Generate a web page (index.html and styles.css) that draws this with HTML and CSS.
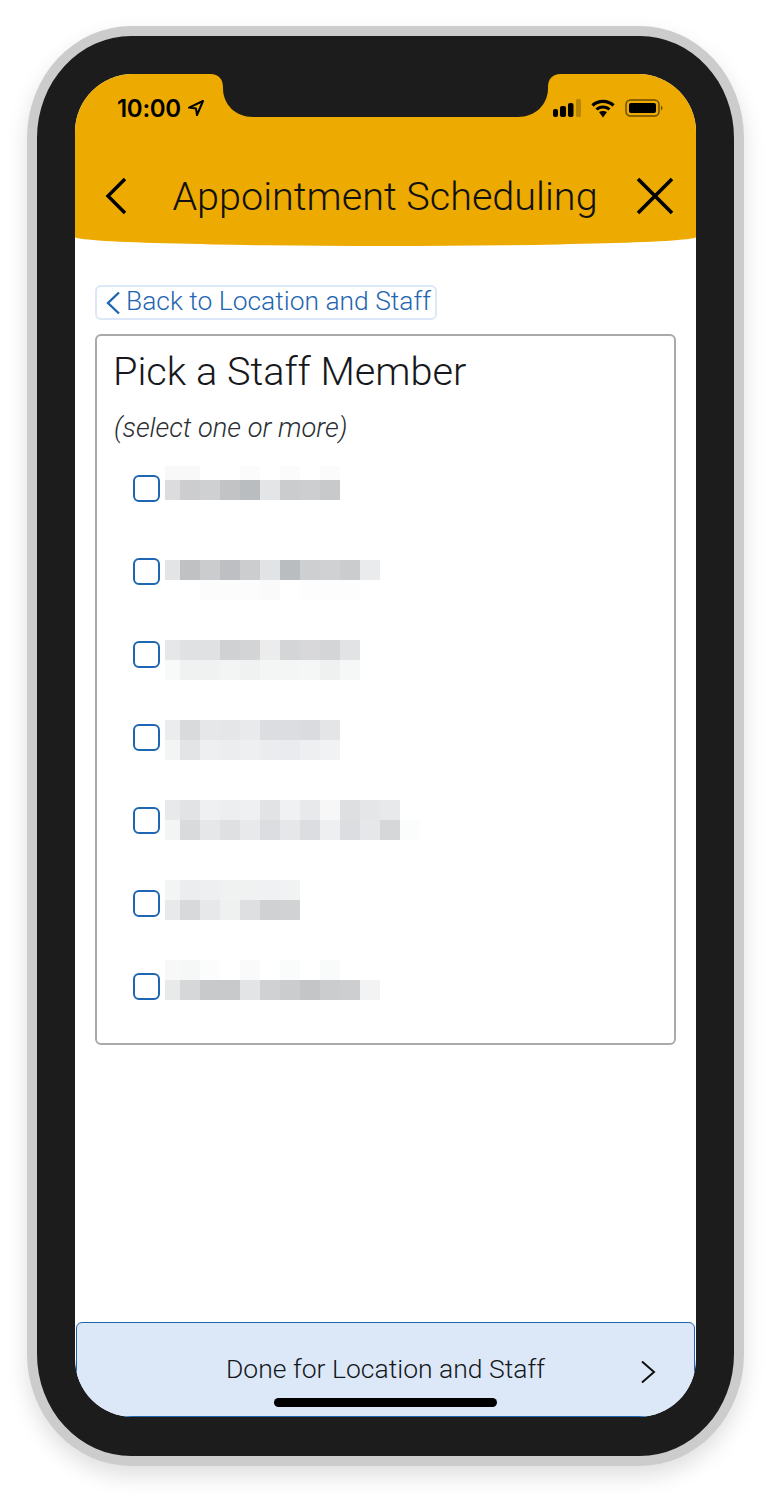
FILE: index.html
```html
<!DOCTYPE html>
<html lang="en">
<head>
<meta charset="utf-8">
<title>Appointment Scheduling</title>
<link rel="stylesheet" href="styles.css">
</head>
<body>
<div class="phone">
  <div class="screen">
    <svg class="notch" viewBox="0 0 349 43" width="349" height="43" aria-hidden="true">
      <path d="M0 0 H349 C342 0 337 5 337 13 V14 C337 31 324 43 307 43 H42 C25 43 12 31 12 14 V13 C12 5 7 0 0 0 Z" fill="#1c1c1c"/>
    </svg>
    <header class="header">
      <div class="status">
        <div class="status-left">
          <span class="time">10:00</span>
          <svg class="arrow" viewBox="0 0 18 18" width="18" height="18" aria-hidden="true">
            <path d="M16 2 L2 8.6 L9 9.6 L10 16 Z" fill="none" stroke="#000" stroke-width="2" stroke-linejoin="round"/>
          </svg>
        </div>
        <div class="status-right">
          <svg viewBox="-1 0 29 18" width="29" height="18" aria-hidden="true">
            <rect x="0" y="10" width="5" height="8" rx="2" fill="#000"/>
            <rect x="7" y="7" width="6" height="11" rx="2" fill="#000"/>
            <rect x="15" y="4" width="5.500" height="14" rx="2" fill="#000"/>
            <rect x="23" y="0" width="5" height="18" rx="1.500" fill="#b98500"/>
          </svg>
          <svg viewBox="0 0 24 19" width="24" height="19" aria-hidden="true">
            <path d="M1.500 6.500 C7 1 17 1 22.500 6.500" fill="none" stroke="#000" stroke-width="3.200"/>
            <path d="M5.500 10.500 C9 7 15 7 18.500 10.500" fill="none" stroke="#000" stroke-width="3"/>
            <path d="M8 13 C10.500 11.500 13.500 11.500 16 13 L12 18.500 Z" fill="#000"/>
          </svg>
          <svg viewBox="0 0 38 18" width="38" height="18" aria-hidden="true">
            <rect x="1" y="1" width="33" height="16" rx="4.500" fill="none" stroke="#6b4e00" stroke-width="1.500"/>
            <rect x="4" y="4" width="27" height="10" rx="2" fill="#000"/>
            <path d="M36 6.500 C38 7.500 38 10.500 36 11.500 Z" fill="#6b4e00"/>
          </svg>
        </div>
      </div>
      <nav class="nav">
        <svg class="nav-back" viewBox="0 0 24 38" width="24" height="38" aria-hidden="true">
          <path d="M21 2 L4 19 L21 36" fill="none" stroke="#000" stroke-width="3.400"/>
        </svg>
        <h1 class="title">Appointment Scheduling</h1>
        <svg viewBox="0 0 38 38" width="38" height="38" aria-hidden="true">
          <path d="M2 2 L36 36 M36 2 L2 36" fill="none" stroke="#000" stroke-width="3.600"/>
        </svg>
      </nav>
    </header>
    <main class="main">
      <a class="back">
        <svg viewBox="0 0 16 24" width="16" height="24" aria-hidden="true">
          <path d="M14 1.500 L3 12 L14 22.500" fill="none" stroke="#1f66b2" stroke-width="2.400"/>
        </svg>
        <span class="back-label">Back to Location and Staff</span>
      </a>
      <section class="card">
        <h2 class="card-title">Pick a Staff Member</h2>
        <p class="hint">(select one or more)</p>
        <div class="list">
          <div class="checks">
            <span class="check"></span>
            <span class="check"></span>
            <span class="check"></span>
            <span class="check"></span>
            <span class="check"></span>
            <span class="check"></span>
            <span class="check"></span>
          </div>
          <svg class="names" viewBox="165 460 255 540" width="255" height="540" shape-rendering="crispEdges" aria-hidden="true">
            <g>
              <rect x="165" y="466" width="35" height="14" fill="#f8f8f8"/><rect x="240" y="466" width="20" height="14" fill="#fbfbfb"/><rect x="280" y="466" width="20" height="14" fill="#fbfbfb"/><rect x="320" y="466" width="20" height="14" fill="#fbfbfb"/>
              <rect x="165" y="480" width="15" height="20" fill="#dcdcde"/><rect x="180" y="480" width="20" height="20" fill="#cdcdcf"/><rect x="200" y="480" width="20" height="20" fill="#cfd0d1"/><rect x="220" y="480" width="20" height="20" fill="#c2c3c5"/><rect x="240" y="480" width="20" height="20" fill="#babdc0"/><rect x="260" y="480" width="20" height="20" fill="#e4e5e7"/><rect x="280" y="480" width="20" height="20" fill="#cbcccd"/><rect x="300" y="480" width="20" height="20" fill="#cdced0"/><rect x="320" y="480" width="20" height="20" fill="#c8c9cb"/>
            </g>
            <g>
              <rect x="165" y="560" width="15" height="20" fill="#e3e4e6"/><rect x="180" y="560" width="20" height="20" fill="#c0c1c3"/><rect x="200" y="560" width="20" height="20" fill="#cbcccd"/><rect x="220" y="560" width="20" height="20" fill="#bebfc2"/><rect x="240" y="560" width="20" height="20" fill="#cbcdce"/><rect x="260" y="560" width="20" height="20" fill="#e2e3e5"/><rect x="280" y="560" width="20" height="20" fill="#babdc0"/><rect x="300" y="560" width="20" height="20" fill="#cdcfd0"/><rect x="320" y="560" width="20" height="20" fill="#d0d1d3"/><rect x="340" y="560" width="20" height="20" fill="#cbccce"/><rect x="360" y="560" width="20" height="20" fill="#eaebec"/>
              <rect x="200" y="580" width="60" height="20" fill="#fcfcfc"/><rect x="260" y="580" width="20" height="20" fill="#fafafa"/><rect x="300" y="580" width="60" height="20" fill="#fdfdfd"/>
            </g>
            <g>
              <rect x="165" y="640" width="15" height="20" fill="#e6e7e8"/><rect x="180" y="640" width="20" height="20" fill="#e0e1e3"/><rect x="200" y="640" width="20" height="20" fill="#e0e1e2"/><rect x="220" y="640" width="20" height="20" fill="#d0d1d3"/><rect x="240" y="640" width="20" height="20" fill="#d3d4d6"/><rect x="260" y="640" width="20" height="20" fill="#ebeceb"/><rect x="280" y="640" width="20" height="20" fill="#d4d5d7"/><rect x="300" y="640" width="20" height="20" fill="#d8d8db"/><rect x="320" y="640" width="20" height="20" fill="#d4d5d7"/><rect x="340" y="640" width="20" height="20" fill="#e2e3e5"/>
              <rect x="165" y="660" width="15" height="20" fill="#f8f9f9"/><rect x="180" y="660" width="20" height="20" fill="#f0f1f1"/><rect x="200" y="660" width="20" height="20" fill="#f0f1f1"/><rect x="220" y="660" width="20" height="20" fill="#f3f4f4"/><rect x="240" y="660" width="20" height="20" fill="#f0f1f1"/><rect x="260" y="660" width="20" height="20" fill="#f4f5f5"/><rect x="280" y="660" width="20" height="20" fill="#f4f5f5"/><rect x="300" y="660" width="20" height="20" fill="#f5f6f6"/><rect x="320" y="660" width="20" height="20" fill="#eff0f0"/><rect x="340" y="660" width="20" height="20" fill="#f6f7f7"/>
            </g>
            <g>
              <rect x="165" y="720" width="15" height="20" fill="#ebecee"/><rect x="180" y="720" width="20" height="20" fill="#d9dadc"/><rect x="200" y="720" width="20" height="20" fill="#e6e7e9"/><rect x="220" y="720" width="20" height="20" fill="#e5e6e8"/><rect x="240" y="720" width="20" height="20" fill="#e9eaec"/><rect x="260" y="720" width="20" height="20" fill="#dcdde0"/><rect x="280" y="720" width="20" height="20" fill="#dcdde0"/><rect x="300" y="720" width="20" height="20" fill="#dadbde"/><rect x="320" y="720" width="20" height="20" fill="#e4e5e7"/>
              <rect x="165" y="740" width="15" height="20" fill="#f3f4f4"/><rect x="180" y="740" width="20" height="20" fill="#e3e4e6"/><rect x="200" y="740" width="20" height="20" fill="#eeeff0"/><rect x="220" y="740" width="20" height="20" fill="#ecedee"/><rect x="240" y="740" width="20" height="20" fill="#eeeff1"/><rect x="260" y="740" width="20" height="20" fill="#ebecee"/><rect x="280" y="740" width="20" height="20" fill="#eaebee"/><rect x="300" y="740" width="20" height="20" fill="#eeeff1"/><rect x="320" y="740" width="20" height="20" fill="#f1f2f3"/>
            </g>
            <g>
              <rect x="165" y="800" width="15" height="20" fill="#e8e9ea"/><rect x="180" y="800" width="20" height="20" fill="#e2e3e5"/><rect x="200" y="800" width="20" height="20" fill="#eff0f1"/><rect x="220" y="800" width="20" height="20" fill="#edeef0"/><rect x="240" y="800" width="20" height="20" fill="#eff0f2"/><rect x="260" y="800" width="20" height="20" fill="#e2e3e5"/><rect x="280" y="800" width="20" height="20" fill="#f0f1f2"/><rect x="300" y="800" width="20" height="20" fill="#e8e9eb"/><rect x="320" y="800" width="20" height="20" fill="#f7f7f8"/><rect x="340" y="800" width="20" height="20" fill="#dedfe1"/><rect x="360" y="800" width="20" height="20" fill="#e5e6e8"/><rect x="380" y="800" width="20" height="20" fill="#e8e9ea"/>
              <rect x="165" y="820" width="15" height="20" fill="#f3f4f4"/><rect x="180" y="820" width="20" height="20" fill="#d9dadc"/><rect x="200" y="820" width="20" height="20" fill="#e6e7e9"/><rect x="220" y="820" width="20" height="20" fill="#dfe0e2"/><rect x="240" y="820" width="20" height="20" fill="#e8e9eb"/><rect x="260" y="820" width="20" height="20" fill="#dcdde0"/><rect x="280" y="820" width="20" height="20" fill="#e6e7e9"/><rect x="300" y="820" width="20" height="20" fill="#dcdde0"/><rect x="320" y="820" width="20" height="20" fill="#eeeff1"/><rect x="340" y="820" width="20" height="20" fill="#dcdde0"/><rect x="360" y="820" width="20" height="20" fill="#e6e7e9"/><rect x="380" y="820" width="20" height="20" fill="#d6d7d9"/><rect x="400" y="820" width="20" height="20" fill="#fbfcfc"/>
            </g>
            <g>
              <rect x="165" y="880" width="15" height="20" fill="#f3f4f4"/><rect x="180" y="880" width="20" height="20" fill="#ecedee"/><rect x="200" y="880" width="20" height="20" fill="#eeeff0"/><rect x="220" y="880" width="20" height="20" fill="#f0f1f1"/><rect x="240" y="880" width="20" height="20" fill="#f0f1f1"/><rect x="260" y="880" width="20" height="20" fill="#f0f1f2"/><rect x="280" y="880" width="20" height="20" fill="#f1f2f2"/>
              <rect x="165" y="900" width="15" height="20" fill="#e8e9eb"/><rect x="180" y="900" width="20" height="20" fill="#d8d9db"/><rect x="200" y="900" width="20" height="20" fill="#e7e8ea"/><rect x="220" y="900" width="20" height="20" fill="#eff0f0"/><rect x="240" y="900" width="20" height="20" fill="#dedfe1"/><rect x="260" y="900" width="20" height="20" fill="#d0d1d3"/><rect x="280" y="900" width="20" height="20" fill="#d1d2d4"/>
            </g>
            <g>
              <rect x="165" y="960" width="15" height="20" fill="#f8f8f8"/><rect x="180" y="960" width="20" height="20" fill="#f6f7f7"/><rect x="200" y="960" width="20" height="20" fill="#fcfcfc"/><rect x="240" y="960" width="20" height="20" fill="#fafafa"/><rect x="280" y="960" width="20" height="20" fill="#fafbfb"/><rect x="320" y="960" width="20" height="20" fill="#f9fafa"/>
              <rect x="165" y="980" width="15" height="20" fill="#e8e9e9"/><rect x="180" y="980" width="20" height="20" fill="#d6d7d9"/><rect x="200" y="980" width="20" height="20" fill="#c8c9cb"/><rect x="220" y="980" width="20" height="20" fill="#c8c9cb"/><rect x="240" y="980" width="20" height="20" fill="#e3e4e6"/><rect x="260" y="980" width="20" height="20" fill="#d0d1d3"/><rect x="280" y="980" width="20" height="20" fill="#cbccce"/><rect x="300" y="980" width="20" height="20" fill="#c4c5c7"/><rect x="320" y="980" width="20" height="20" fill="#cbccce"/><rect x="340" y="980" width="20" height="20" fill="#cdced0"/><rect x="360" y="980" width="20" height="20" fill="#f3f3f4"/>
            </g>
          </svg>
        </div>
      </section>
    </main>
    <footer class="footer">
      <span></span>
      <span class="done">Done for Location and Staff</span>
      <svg class="done-arrow" viewBox="0 0 16 24" width="16" height="24" aria-hidden="true">
        <path d="M2 1.500 L14 12 L2 22.500" fill="none" stroke="#111" stroke-width="2"/>
      </svg>
      <span class="home-bar"></span>
    </footer>
  </div>
</div>
</body>
</html>
```
FILE: styles.css
```css
* { box-sizing: border-box; }
html, body { margin: 0; padding: 0; background: #fff; }
body { height: 1494px; overflow: hidden; font-family: Roboto, "Liberation Sans", sans-serif; }
.phone {
  width: 717px;
  height: 1440px;
  margin: 26px 0 0 27px;
  padding: 38px;
  background: #1c1c1c;
  border: 10px solid #ccc;
  border-radius: 104px / 112px;
  box-shadow: 0 10px 22px rgba(0, 0, 0, .13);
}
.screen {
  position: relative;
  width: 621px;
  height: 1343px;
  display: flex;
  flex-direction: column;
  background: #fff;
  border-radius: 58px;
  overflow: hidden;
}
.notch { position: absolute; top: 0; left: 136px; }
.header {
  height: 172px;
  flex: none;
  background: #edaa00;
  border-radius: 0 0 50% 50% / 0 0 9px 9px;
  padding-top: 20px;
}
.status {
  height: 28px;
  display: flex;
  justify-content: space-between;
  align-items: center;
  padding: 0 33px 0 42px;
}
.status-left { display: flex; align-items: center; gap: 6px; }
.time { font-family: Inter, sans-serif; font-weight: 600; font-size: 24px; letter-spacing: -.3px; color: #000; }
.status-right { display: flex; align-items: center; gap: 10px; }
.nav {
  margin-top: 44px;
  height: 60px;
  display: flex;
  justify-content: space-between;
  align-items: center;
  padding: 0 22px 0 29px;
}
.nav-back { margin-right: 6px; }
.title { margin: 0; font-weight: 300; font-size: 39.6px; color: #111; }
.main { flex: 1; padding: 39px 20px 0; }
.back {
  display: flex;
  align-items: center;
  gap: 5px;
  width: 342px;
  height: 35px;
  padding-left: 8px;
  border: 2px solid #dce8f7;
  border-radius: 6px;
  color: #1f66b2;
  font-weight: 300;
  font-size: 26.400px;
}
.back-label { margin-top: -3px; }
.card {
  height: 711px;
  margin-top: 14px;
  padding: 11px 17px 0 16px;
  border: 2px solid #a9a9a9;
  border-radius: 6px;
}
.card-title { margin: 0; font-weight: 300; font-size: 39.7px; line-height: 50px; color: #16181c; }
.hint { margin: 15px 0 0 1px; font-weight: 300; font-style: italic; font-size: 27.300px; line-height: 32px; color: #2b2f33; }
.list { display: flex; align-items: flex-start; gap: 5px; margin-top: 31px; padding-left: 20px; }
.checks { display: flex; flex-direction: column; gap: 56px; }
.check {
  display: block;
  width: 27px;
  height: 27px;
  border: 2px solid #1f66b2;
  border-radius: 6px;
}
.names { margin-top: -15px; flex: none; }
.footer {
  position: relative;
  height: 95px;
  flex: none;
  display: grid;
  grid-template-columns: 1fr auto 1fr;
  align-items: center;
  margin: 0 1px;
  background: #dce8f7;
  border: 1.500px solid #1f66b2;
  border-radius: 6px 6px 0 0;
}
.done { margin-top: -2px; font-weight: 300; font-size: 26.500px; color: #15181c; }
.done-arrow { justify-self: end; margin: 4px 38px 0 0; }
.home-bar {
  position: absolute;
  left: 197px;
  bottom: 9px;
  width: 223px;
  height: 9px;
  border-radius: 5px;
  background: #000;
}
```
